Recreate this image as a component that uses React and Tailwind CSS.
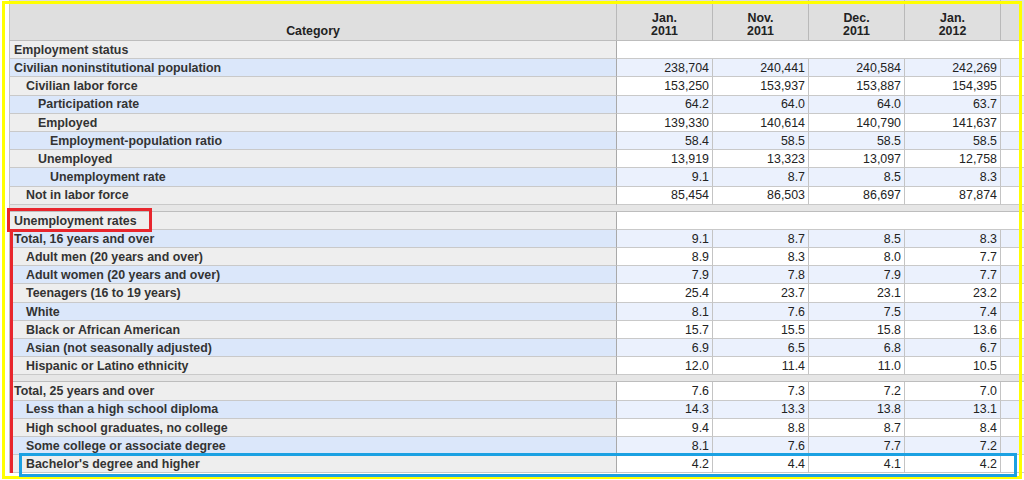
import React from "react";

const indent = {
  0: "pl-[4px]",
  1: "pl-[16px]",
  2: "pl-[28px]",
  3: "pl-[40px]",
};

const group1 = [
  { label: "Employment status", lvl: 0, section: true },
  { label: "Civilian noninstitutional population", lvl: 0, blue: true, v: ["238,704", "240,441", "240,584", "242,269"] },
  { label: "Civilian labor force", lvl: 1, v: ["153,250", "153,937", "153,887", "154,395"] },
  { label: "Participation rate", lvl: 2, blue: true, v: ["64.2", "64.0", "64.0", "63.7"] },
  { label: "Employed", lvl: 2, v: ["139,330", "140,614", "140,790", "141,637"] },
  { label: "Employment-population ratio", lvl: 3, blue: true, v: ["58.4", "58.5", "58.5", "58.5"] },
  { label: "Unemployed", lvl: 2, v: ["13,919", "13,323", "13,097", "12,758"] },
  { label: "Unemployment rate", lvl: 3, blue: true, v: ["9.1", "8.7", "8.5", "8.3"] },
  { label: "Not in labor force", lvl: 1, v: ["85,454", "86,503", "86,697", "87,874"] },
];

const group2 = [
  { label: "Unemployment rates", lvl: 0, section: true },
  { label: "Total, 16 years and over", lvl: 0, blue: true, v: ["9.1", "8.7", "8.5", "8.3"] },
  { label: "Adult men (20 years and over)", lvl: 1, v: ["8.9", "8.3", "8.0", "7.7"] },
  { label: "Adult women (20 years and over)", lvl: 1, blue: true, v: ["7.9", "7.8", "7.9", "7.7"] },
  { label: "Teenagers (16 to 19 years)", lvl: 1, v: ["25.4", "23.7", "23.1", "23.2"] },
  { label: "White", lvl: 1, blue: true, v: ["8.1", "7.6", "7.5", "7.4"] },
  { label: "Black or African American", lvl: 1, v: ["15.7", "15.5", "15.8", "13.6"] },
  { label: "Asian (not seasonally adjusted)", lvl: 1, blue: true, v: ["6.9", "6.5", "6.8", "6.7"] },
  { label: "Hispanic or Latino ethnicity", lvl: 1, v: ["12.0", "11.4", "11.0", "10.5"] },
];

const group3 = [
  { label: "Total, 25 years and over", lvl: 0, v: ["7.6", "7.3", "7.2", "7.0"] },
  { label: "Less than a high school diploma", lvl: 1, blue: true, v: ["14.3", "13.3", "13.8", "13.1"] },
  { label: "High school graduates, no college", lvl: 1, v: ["9.4", "8.8", "8.7", "8.4"] },
  { label: "Some college or associate degree", lvl: 1, blue: true, v: ["8.1", "7.6", "7.7", "7.2"] },
  { label: "Bachelor's degree and higher", lvl: 1, v: ["4.2", "4.4", "4.1", "4.2"] },
];

const COLS = "grid grid-cols-[608px_96px_96px_96px_96px_40px]";

function Row({ r }) {
  const labelBg = r.blue ? "bg-[#dbe7fa]" : "bg-[#eeeeee]";
  const dataBg = r.blue ? "bg-[#ebf1fd]" : "bg-white";
  return (
    <div className={`${COLS} h-[18.2px]`}>
      <div
        className={`${labelBg} ${indent[r.lvl]} border-l border-l-[#c4c4c4] border-r border-r-[#a9a9a9] border-b border-b-[#c9c9c9] flex items-center pt-[1px] font-bold text-[#333333] whitespace-nowrap`}
      >
        {r.label}
      </div>
      {r.section ? (
        <div className="col-span-5 bg-white border-b border-b-[#c9c9c9]" />
      ) : (
        <>
          {r.v.map((x, i) => (
            <div
              key={i}
              className={`${dataBg} border-r border-r-[#c4c4c4] border-b border-b-[#c9c9c9] flex items-center justify-end pt-[1px] pr-[3px] text-[#222222]`}
            >
              {x}
            </div>
          ))}
          <div className={`${dataBg} border-b border-b-[#c9c9c9]`} />
        </>
      )}
    </div>
  );
}

function Spacer() {
  return <div className="h-[7px] bg-[#e6e6e6] border-b border-b-[#bdbdbd] border-l border-l-[#c4c4c4]" />;
}

export default function App() {
  return (
    <div className="relative w-[1024px] h-[480px] overflow-hidden bg-white font-['Liberation_Sans',Arial,sans-serif] text-[12.4px] leading-none">
      <div className="pl-[9px] w-[1060px]">
        <div className={`${COLS} h-[41px] bg-[#dfdfdf] font-bold text-[#222222] leading-[13px]`}>
          <div className="border-l border-l-[#c4c4c4] border-r border-r-[#b9b9b9] border-b border-b-[#bdbdbd] flex items-end justify-center pb-[2px]">
            Category
          </div>
          {[
            ["Jan.", "2011"],
            ["Nov.", "2011"],
            ["Dec.", "2011"],
            ["Jan.", "2012"],
          ].map((h, i) => (
            <div
              key={i}
              className="border-r border-r-[#b9b9b9] border-b border-b-[#bdbdbd] flex flex-col items-center justify-end pb-[2px]"
            >
              <span>{h[0]}</span>
              <span>{h[1]}</span>
            </div>
          ))}
          <div className="border-b border-b-[#bdbdbd]" />
        </div>
        {group1.map((r, i) => (
          <Row key={"a" + i} r={r} />
        ))}
        <Spacer />
        {group2.map((r, i) => (
          <Row key={"b" + i} r={r} />
        ))}
        <Spacer />
        {group3.map((r, i) => (
          <Row key={"c" + i} r={r} />
        ))}
      </div>

      {/* annotations */}
      <div className="absolute left-[2px] top-[1px] w-[1020px] h-[478px] border-[3px] border-[#ffff00] pointer-events-none" />
      <div className="absolute left-[7px] top-[208px] w-[145px] h-[24px] border-[3px] border-[#e8262d]" />
      <div className="absolute left-[10px] top-[232px] w-[3px] h-[241px] bg-[#e8262d]" />
      <div className="absolute left-[19px] top-[453px] w-[998px] h-[24px] border-[3px] border-[#1ba1e2]" />
    </div>
  );
}
